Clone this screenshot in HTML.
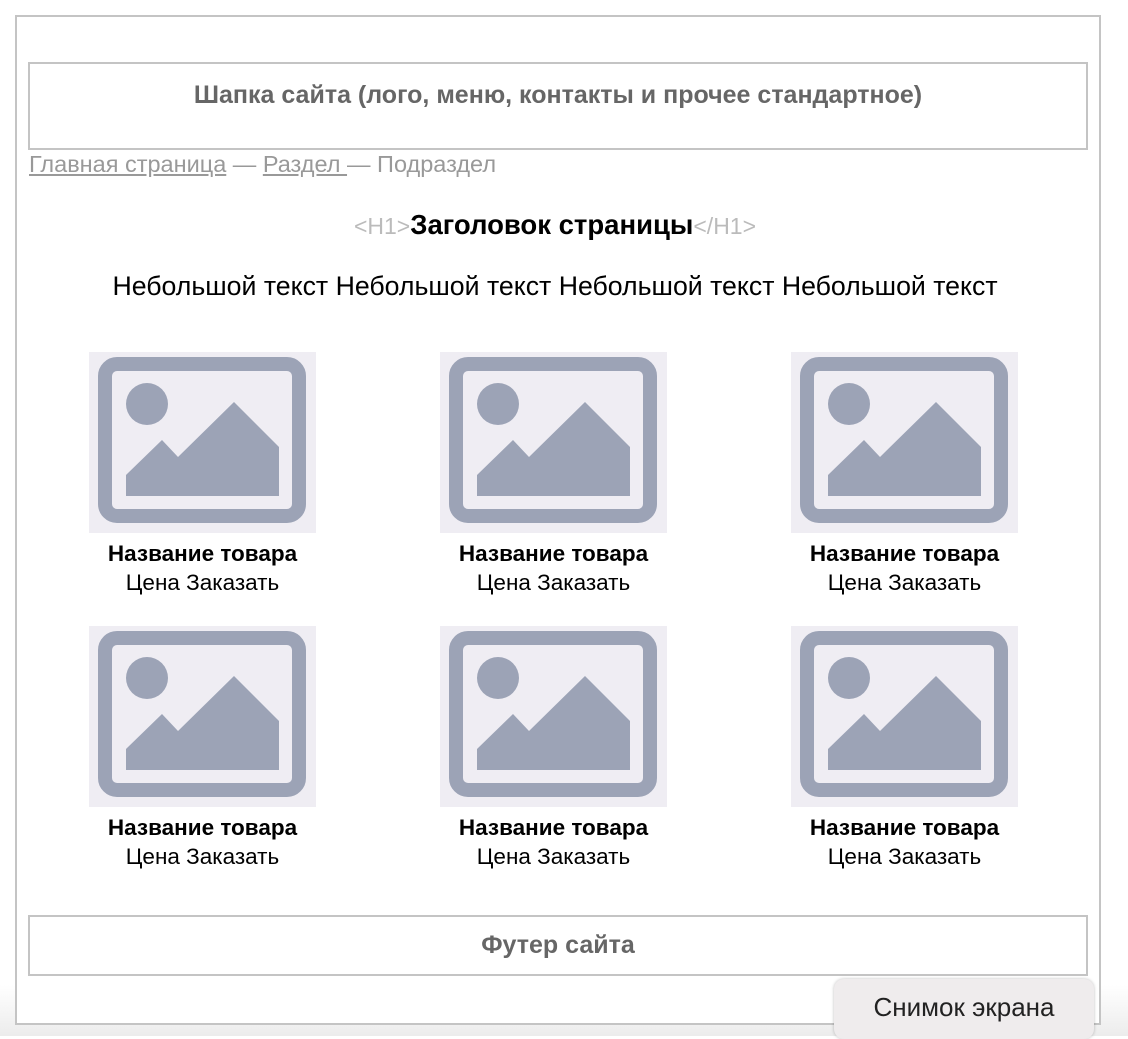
<!DOCTYPE html>
<html><head><meta charset="utf-8"><style>
body{margin:0;width:1128px;height:1036px;background:#fff;font-family:"Liberation Sans",sans-serif;position:relative;overflow:hidden}
.bot{position:absolute;left:0;top:985px;width:1128px;height:51px;background:linear-gradient(#fff,#ececec)}
.frame{position:absolute;left:15px;top:15px;width:1082px;height:1006px;border:2px solid #c4c4c4;background:#fff}
.box{position:absolute;left:28px;width:1056px;border:2px solid #c4c4c4;color:#666;font-weight:bold;font-size:25px;text-align:center}
.crumb{position:absolute;left:29px;top:151px;font-size:23.5px;color:#999}
.crumb a{color:#999;text-decoration:underline}
.h1{position:absolute;left:0;width:1110px;top:209px;text-align:center;font-size:27.5px;font-weight:bold}
.h1 span{color:#bbb;font-weight:normal;font-size:23px}
.txt{position:absolute;left:0;width:1110px;top:271px;text-align:center;font-size:26.7px}
.card{position:absolute;width:227px;text-align:center;font-size:22.5px;line-height:29px}
.card svg{display:block;margin-bottom:6px}
.tip{position:absolute;left:834px;top:979px;width:260px;height:60px;background:#efeced;border-radius:10px;box-shadow:0 0 3px rgba(0,0,0,.25);font-size:26px;color:#222;text-align:center;line-height:56px}
</style></head><body>
<div class="bot"></div>
<div class="frame"></div>
<div class="box" style="top:62px;height:84px;line-height:62px">Шапка сайта (лого, меню, контакты и прочее стандартное)</div>
<div class="crumb"><a>Главная страница</a> — <a>Раздел </a> — Подраздел</div>
<div class="h1"><span>&lt;H1&gt;</span>Заголовок страницы<span>&lt;/H1&gt;</span></div>
<div class="txt">Небольшой текст Небольшой текст Небольшой текст Небольшой текст</div>
<div id="cards"></div>
<div class="box" style="top:915px;height:57px;line-height:57px">Футер сайта</div>
<div class="tip">Снимок экрана</div>
<script>
var s='<svg width="227" height="181" viewBox="0 0 227 181"><rect width="227" height="181" fill="#efedf3"/><rect x="16" y="12" width="194" height="152" rx="12" fill="none" stroke="#9ca3b6" stroke-width="14"/><circle cx="58" cy="52" r="21" fill="#9ca3b6"/><polygon points="37,123 73,88 89,105 145,50 190,95 190,144 37,144" fill="#9ca3b6"/></svg><b>Название товара</b><br>Цена Заказать';
var h='';[89,440,791].forEach(function(x){[352,626].forEach(function(y){h+='<div class="card" style="left:'+x+'px;top:'+y+'px">'+s+'</div>'})});
document.getElementById('cards').innerHTML=h;
</script>
</body></html>
